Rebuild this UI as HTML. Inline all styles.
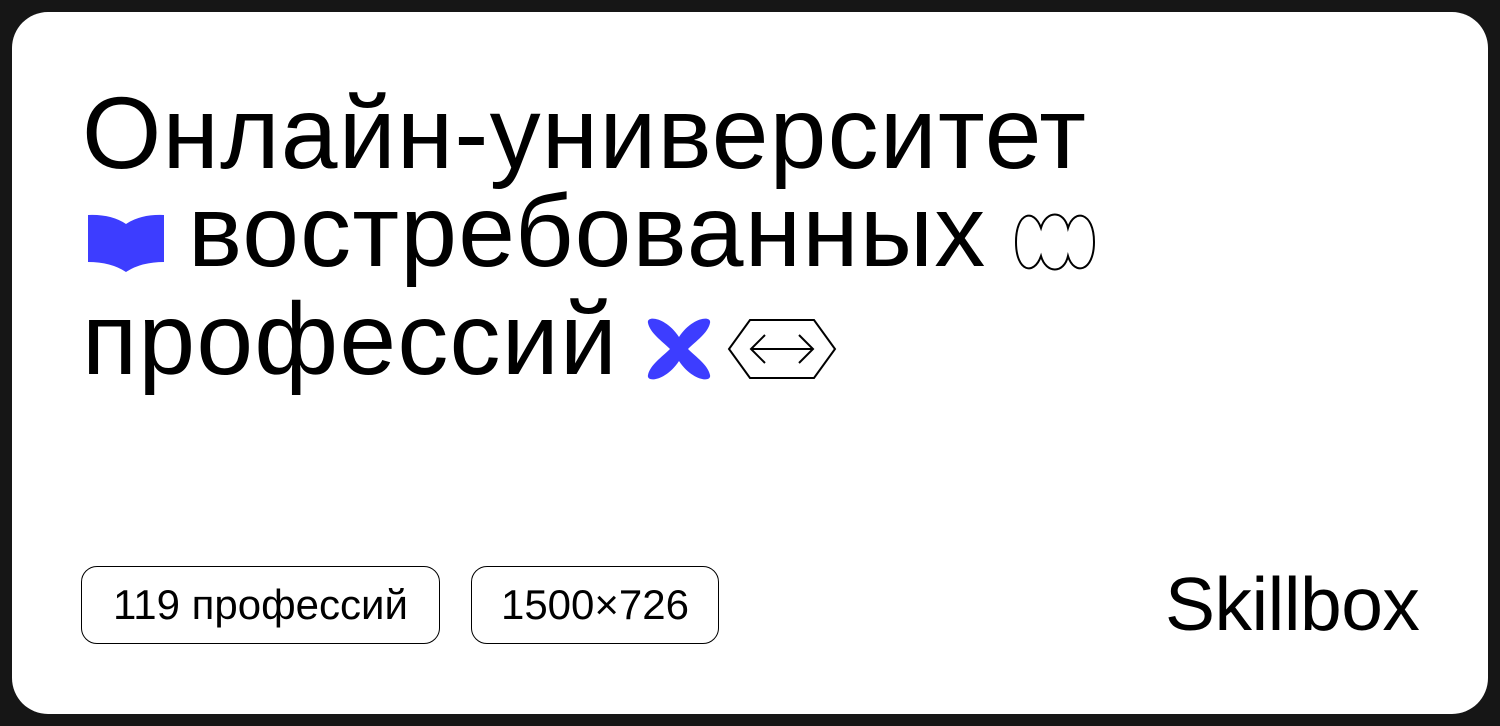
<!DOCTYPE html>
<html><head><meta charset="utf-8"><style>
html,body{margin:0;padding:0;width:1500px;height:726px;background:#161616;overflow:hidden;font-family:"Liberation Sans",sans-serif;color:#000}
.card{position:absolute;left:12px;top:12px;width:1476px;height:702px;background:#fff;border-radius:36px}
.t{position:absolute;font-size:102px;line-height:1;white-space:nowrap;letter-spacing:1.2px}
.chip{position:absolute;top:566px;height:76px;border:1.6px solid #000;border-radius:16px;font-size:42px;line-height:76px;text-align:center;box-sizing:content-box}
svg{position:absolute}
</style></head><body>
<div class="card"></div>
<div class="t" style="left:82px;top:82px">Онлайн-университет</div>
<div class="t" style="left:188px;top:180px">востребованных</div>
<div class="t" style="left:82px;top:288px">профессий</div>
<svg style="left:86px;top:212px" width="80" height="64" viewBox="0 0 80 64"><path d="M2 3 Q25 2 40 12 Q55 2 78 3 L78 50 Q55 50 40 60 Q25 50 2 50 Z" fill="#3d3dff"/></svg>
<svg style="left:1012px;top:210px" width="86" height="64" viewBox="0 0 86 64"><path d="M29 18 C22 -2 4 2 4 32 C4 62 22 66 29 46 C34 64 52 64 56 46 C62 66 82 62 82 32 C82 2 62 -2 56 18 C52 0 34 0 29 18 Z" fill="none" stroke="#000" stroke-width="2"/></svg>
<svg style="left:644px;top:315px" width="70" height="68" viewBox="0 0 70 68"><path d="M35 22 C48 2 68 0 66 8 C64 18 52 26 44 34 C52 42 64 50 66 60 C68 68 48 66 35 46 C22 66 2 68 4 60 C6 50 18 42 26 34 C18 26 6 18 4 8 C2 0 22 2 35 22 Z" fill="#3d3dff"/></svg>
<svg style="left:726px;top:318px" width="112" height="62" viewBox="0 0 112 62"><path d="M24 2 L88 2 L109 31 L88 60 L24 60 L3 31 Z" fill="none" stroke="#000" stroke-width="2"/><path d="M25 31 L87 31 M39 17 L25 31 L39 45 M73 17 L87 31 L73 45" fill="none" stroke="#000" stroke-width="2"/></svg>
<div class="chip" style="left:81px;width:357px">119 профессий</div>
<div class="chip" style="left:471px;width:246px">1500×726</div>
<div style="position:absolute;left:1165px;top:567px;font-size:75px;line-height:1;letter-spacing:-0.5px">Skillbox</div>
</body></html>
